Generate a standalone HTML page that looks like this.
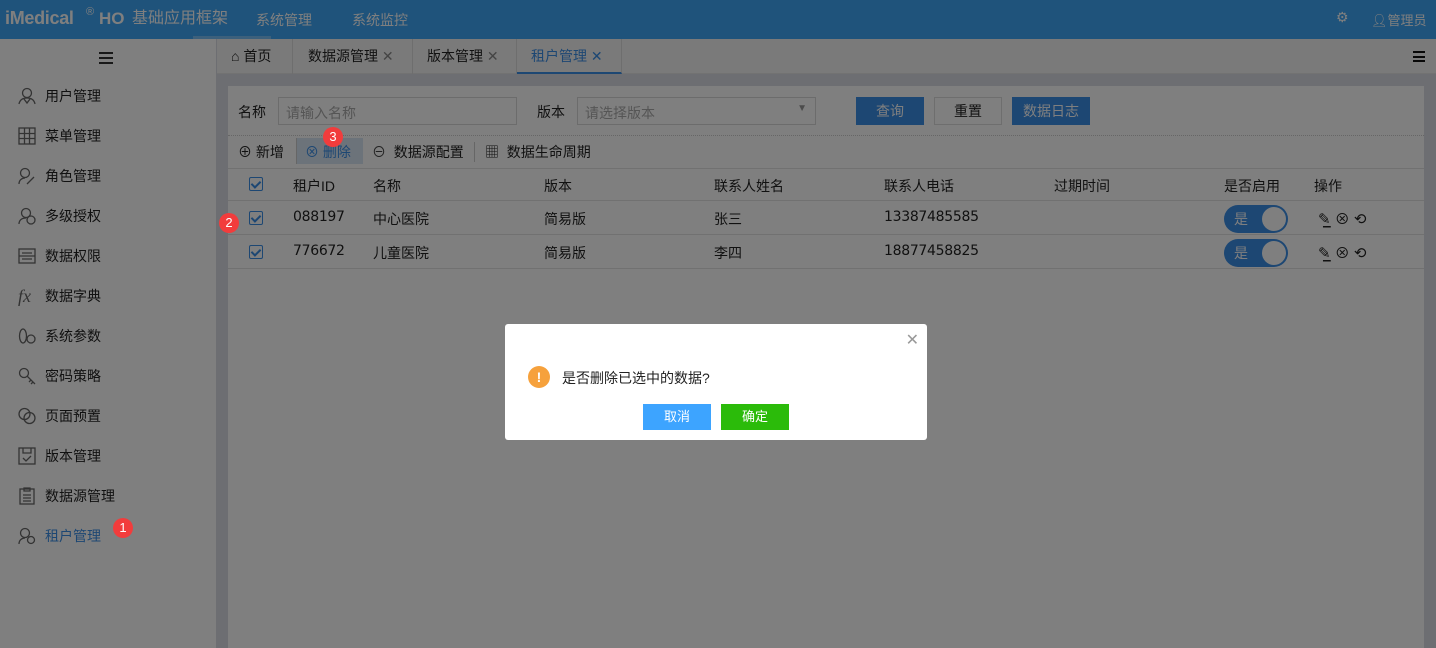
<!DOCTYPE html>
<html><head><meta charset="utf-8"><style>
*{box-sizing:border-box;margin:0;padding:0}
body{width:1436px;height:648px;overflow:hidden;position:relative;font-family:"Liberation Sans","Noto Sans CJK SC",sans-serif;font-size:14px;color:#222;background:#fff}
.abs{position:absolute}
.hdr{left:0;top:0;width:1436px;height:39px;background:#3ea6f6;color:#fff}
.side{left:0;top:39px;width:216px;height:609px;background:#fff}
.gut{left:216px;top:39px;width:1220px;height:609px;background:#dadde4}
.tabs{left:217px;top:39px;width:1219px;height:35px;background:#f4f4f4;border-bottom:1px solid #e4e4e4}
.card{left:228px;top:86px;width:1196px;height:562px;background:#fff}
.mi{position:absolute;left:18px;height:20px;line-height:20px;font-size:14px}
.mi svg{position:absolute;left:0;top:1px}
.mi span{position:absolute;left:27px;white-space:nowrap}
.ov{left:0;top:0;width:1436px;height:648px;background:rgba(0,0,0,.5)}
.badge{position:absolute;width:20px;height:20px;border-radius:50%;background:#f23c3c;color:#fff;font-size:13px;text-align:center;line-height:20px}
.tab{position:absolute;top:0;height:35px;line-height:34px;border-right:1px solid #ddd;white-space:nowrap}
.cb{position:absolute;width:14px;height:14px;border:1px solid #3a8ee6;border-radius:2px}
.cb:after{content:"";position:absolute;left:3px;top:1px;width:4px;height:7px;border:solid #3a8ee6;border-width:0 2px 2px 0;transform:rotate(45deg)}
.t{position:absolute;white-space:nowrap}
.row{position:absolute;left:228px;width:1196px;border-bottom:1px solid #e2e2e2}
.sw{position:absolute;width:64px;height:28px;border-radius:14px;background:#3a8ee6}
.sw i{position:absolute;right:2px;top:2px;width:24px;height:24px;border-radius:50%;background:#fff}
.sw b{position:absolute;left:10px;top:4px;color:#fff;font-weight:normal;font-size:14px}
.num{font-family:"DejaVu Sans","Liberation Sans",sans-serif;font-size:14px;letter-spacing:-0.3px}
</style></head><body>
<div class="abs hdr">
 <div class="t" style="left:5px;top:8px;font-size:18px;font-weight:bold;line-height:20px;letter-spacing:-0.3px">iMedical</div>
 <div class="t" style="left:86px;top:6px;font-size:11px">®</div>
 <div class="t" style="left:99px;top:9px;font-size:17px;font-weight:bold;line-height:20px">HO</div>
 <div class="t" style="left:132px;top:9px;font-size:16px;line-height:20px">基础应用框架</div>
 <div class="t" style="left:193px;top:36px;width:78px;height:3px;background:rgba(255,255,255,.3)"></div>
 <div class="t" style="left:256px;top:10px;font-size:14px;line-height:20px">系统管理</div>
 <div class="t" style="left:352px;top:10px;font-size:14px;line-height:20px">系统监控</div>
 <div class="t" style="left:1336px;top:9px;font-size:14px">⚙</div>
 <div class="t" style="left:1371px;top:10px;font-size:13px">👤︎管理员</div>
</div>
<div class="abs side">
 <div class="t" style="left:99px;top:13px;width:14px;height:12px;border-top:2px solid #333;border-bottom:2px solid #333"><div style="margin-top:3px;border-top:2px solid #333"></div></div>
 <div class="mi" style="top:47px"><svg width="18" height="18" fill="none" stroke="#666" stroke-width="1.3"><circle cx="9" cy="6" r="4.5"/><path d="M1 17c1-5 5-6 8-6s7 1 8 6M6 12l3 4 3-4"/></svg><span>用户管理</span></div>
 <div class="mi" style="top:87px"><svg width="18" height="18" fill="none" stroke="#666" stroke-width="1.3"><rect x="1" y="1" width="16" height="16"/><path d="M6.5 1v16M11.5 1v16M1 6.5h16M1 11.5h16"/></svg><span>菜单管理</span></div>
 <div class="mi" style="top:127px"><svg width="18" height="18" fill="none" stroke="#666" stroke-width="1.3"><circle cx="7" cy="6" r="4.5"/><path d="M1 17c0-4 3-6 6-6M9 17l7-7"/></svg><span>角色管理</span></div>
 <div class="mi" style="top:167px"><svg width="18" height="18" fill="none" stroke="#666" stroke-width="1.3"><circle cx="8" cy="6" r="4.5"/><path d="M1 17c0-4 3-6 7-6"/><circle cx="13" cy="13" r="4"/></svg><span>多级授权</span></div>
 <div class="mi" style="top:207px"><svg width="18" height="18" fill="none" stroke="#666" stroke-width="1.3"><rect x="1" y="2" width="16" height="14"/><path d="M1 9h16M4 6h10M4 12h10"/></svg><span>数据权限</span></div>
 <div class="mi" style="top:247px"><span style="left:0;font-style:italic;font-family:'Liberation Serif',serif;font-size:18px;color:#666">fx</span><span>数据字典</span></div>
 <div class="mi" style="top:287px"><svg width="18" height="18" fill="none" stroke="#666" stroke-width="1.3"><ellipse cx="5" cy="9" rx="3.5" ry="7"/><circle cx="13" cy="12" r="4"/></svg><span>系统参数</span></div>
 <div class="mi" style="top:327px"><svg width="18" height="18" fill="none" stroke="#666" stroke-width="1.3"><circle cx="6" cy="6" r="4.5"/><path d="M9 9l8 8M13 13l-2 2M15 15l-2 2"/></svg><span>密码策略</span></div>
 <div class="mi" style="top:367px"><svg width="18" height="18" fill="none" stroke="#666" stroke-width="1.3"><circle cx="6.5" cy="7" r="5.5"/><circle cx="11.5" cy="11" r="5.5"/></svg><span>页面预置</span></div>
 <div class="mi" style="top:407px"><svg width="18" height="18" fill="none" stroke="#666" stroke-width="1.3"><rect x="1" y="1" width="16" height="16"/><path d="M5 1v5h8V1M5 11l3 3 5-5"/></svg><span>版本管理</span></div>
 <div class="mi" style="top:447px"><svg width="18" height="18" fill="none" stroke="#666" stroke-width="1.3"><rect x="2" y="2" width="14" height="15"/><path d="M6 1h6v3H6zM5 8h8M5 11h8M5 14h8"/></svg><span>数据源管理</span></div>
 <div class="mi" style="top:487px;color:#3a8ee6"><svg width="18" height="18" fill="none" stroke="#666" stroke-width="1.3"><circle cx="7" cy="6" r="4.5"/><path d="M1 17c0-4 3-6 6-6"/><circle cx="13" cy="13" r="3.5"/></svg><span>租户管理</span></div>
</div>
<div class="abs gut"></div>
<div class="abs tabs">
 <div class="tab" style="left:0;width:76px;padding-left:14px">⌂ 首页</div>
 <div class="tab" style="left:76px;width:120px;padding-left:15px">数据源管理 <span style="color:#888">✕</span></div>
 <div class="tab" style="left:196px;width:104px;padding-left:14px">版本管理 <span style="color:#888">✕</span></div>
 <div class="tab" style="left:300px;width:105px;padding-left:14px;color:#3a8ee6;border-bottom:2px solid #3a8ee6">租户管理 <span>✕</span></div>
 <div class="t" style="left:1196px;top:12px;width:12px;height:11px;border-top:2px solid #111;border-bottom:2px solid #111"><div style="margin-top:2.5px;border-top:2px solid #111"></div></div>
</div>
<div class="abs card">
 <div class="t" style="left:10px;top:16px">名称</div>
 <div class="t" style="left:50px;top:11px;width:239px;height:28px;border:1px solid #d8d8d8;padding:5px 7px;color:#aaa">请输入名称</div>
 <div class="t" style="left:309px;top:16px">版本</div>
 <div class="t" style="left:349px;top:11px;width:239px;height:28px;border:1px solid #d8d8d8;padding:5px 7px;color:#aaa">请选择版本<span style="position:absolute;right:8px;top:5px;font-size:10px;color:#999">▼</span></div>
 <div class="t" style="left:628px;top:11px;width:68px;height:28px;background:#3a8ee6;color:#fff;text-align:center;line-height:28px">查询</div>
 <div class="t" style="left:706px;top:11px;width:68px;height:28px;border:1px solid #ddd;text-align:center;line-height:26px">重置</div>
 <div class="t" style="left:784px;top:11px;width:78px;height:28px;background:#3a8ee6;color:#fff;text-align:center;line-height:28px">数据日志</div>
 <div class="t" style="left:0;top:49px;width:1196px;border-top:1px dotted #ccc"></div>
 <div class="t" style="left:10px;top:56px">⊕ 新增</div>
 <div class="t" style="left:68px;top:52px;width:67px;height:26px;background:#d9e7f5;border-left:1px solid #ccc"></div>
 <div class="t" style="left:77px;top:56px;color:#3a8ee6">⊗ 删除</div>
 <div class="t" style="left:144px;top:56px"><span style="color:#444">⊖</span>&nbsp; 数据源配置</div>
 <div class="t" style="left:246px;top:56px;height:20px;border-left:1px solid #ccc"></div>
 <div class="t" style="left:257px;top:56px">▦&nbsp; 数据生命周期</div>
</div>
<div class="row" style="top:168px;height:33px;border-top:1px solid #e2e2e2"></div>
<div class="row" style="top:201px;height:34px"></div>
<div class="row" style="top:235px;height:34px"></div>
<div class="cb" style="left:249px;top:177px"></div><div class="cb" style="left:249px;top:211px"></div><div class="cb" style="left:249px;top:245px"></div>
<div class="t" style="left:293px;top:176px">租户ID</div><div class="t" style="left:373px;top:176px">名称</div><div class="t" style="left:544px;top:176px">版本</div><div class="t" style="left:714px;top:176px">联系人姓名</div><div class="t" style="left:884px;top:176px">联系人电话</div><div class="t" style="left:1054px;top:176px">过期时间</div><div class="t" style="left:1224px;top:176px">是否启用</div><div class="t" style="left:1314px;top:176px">操作</div>
<div class="t num" style="left:293px;top:209px">088197</div><div class="t" style="left:373px;top:209px">中心医院</div><div class="t" style="left:544px;top:209px">简易版</div><div class="t" style="left:714px;top:209px">张三</div><div class="t num" style="left:884px;top:209px">13387485585</div>
<div class="t num" style="left:293px;top:243px">776672</div><div class="t" style="left:373px;top:243px">儿童医院</div><div class="t" style="left:544px;top:243px">简易版</div><div class="t" style="left:714px;top:243px">李四</div><div class="t num" style="left:884px;top:243px">18877458825</div>
<div class="sw" style="left:1224px;top:205px"><b>是</b><i></i></div><div class="sw" style="left:1224px;top:239px"><b>是</b><i></i></div>
<div class="t" style="left:1318px;top:208px;font-size:15px">✎̲ ⊗ ⟲</div><div class="t" style="left:1318px;top:242px;font-size:15px">✎̲ ⊗ ⟲</div>
<div class="abs ov"></div>
<div class="badge" style="left:113px;top:518px">1</div>
<div class="badge" style="left:219px;top:213px">2</div>
<div class="badge" style="left:323px;top:127px">3</div>
<div class="badge" style="left:797px;top:405px">4</div>
<div class="abs" style="left:505px;top:324px;width:422px;height:116px;background:#fff;border-radius:3px">
 <div class="t" style="right:8px;top:6px;color:#999;font-size:16px">✕</div>
 <div class="t" style="left:23px;top:42px;width:22px;height:22px;border-radius:50%;background:#f6a13c;color:#fff;text-align:center;line-height:22px;font-weight:bold">!</div>
 <div class="t" style="left:57px;top:44px">是否删除已选中的数据?</div>
 <div class="t" style="left:138px;top:80px;width:68px;height:26px;background:#3da4ff;color:#fff;text-align:center;line-height:26px;font-size:13px">取消</div>
 <div class="t" style="left:216px;top:80px;width:68px;height:26px;background:#2bbb0a;color:#fff;text-align:center;line-height:26px;font-size:13px">确定</div>
</div>
</body></html>
